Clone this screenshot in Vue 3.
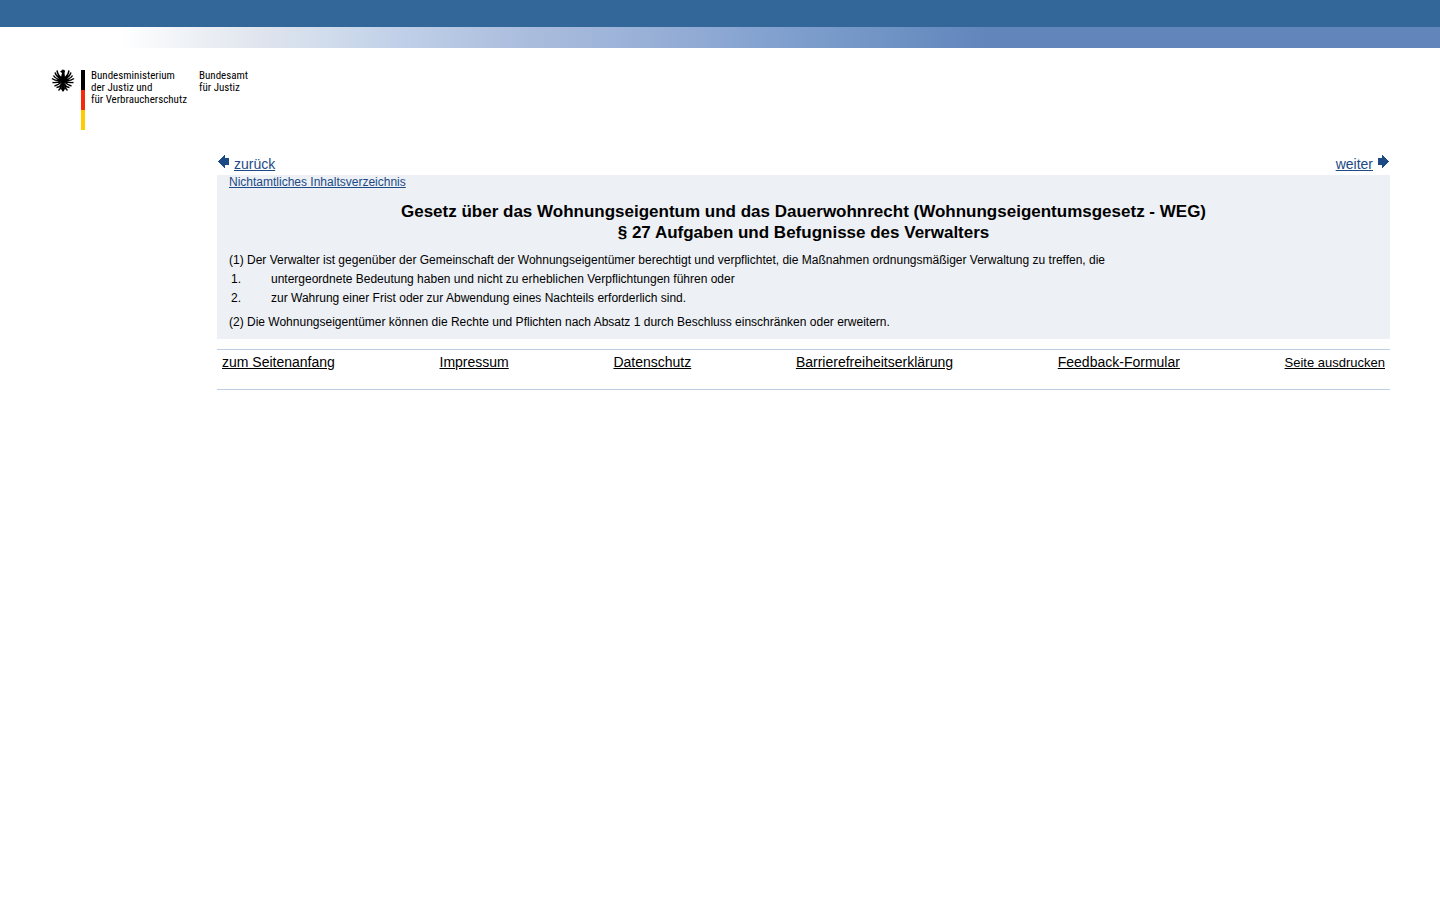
<template>
  <div class="page">
    <header>
      <div class="bar"></div>
      <div class="fade"></div>
      <div class="brand">
        <svg class="eagle" viewBox="0 0 24 24" aria-hidden="true">
          <path d="M10 3 11.5 1.5 13.5 2 14 3.5 13.5 5 14 9 14.5 13 13.5 17 14 21 12.5 23.5H11.5L10 21 10.5 17 9.5 13 10 9 11 5 9 3.5Z" />
          <path
            class="feathers"
            d="M10.5 10Q7 8 6 2.5M10.5 11Q5.5 9 4 4.500M10.5 12Q4.500 11 2.500 7.500M10.500 12.500Q4 13 1 10.500M10 13.500Q5 15 1.500 14.500M10 14.500Q7 17 3.500 18M10.500 16Q9.500 19 5.500 19.500M10.500 17Q9.500 21 7.500 22.500"
          />
          <path
            class="feathers"
            d="M13.5 10Q17 8 18 2.5M13.5 11Q18.500 9 20 4.500M13.500 12Q19.500 11 21.500 7.500M13.500 12.500Q20 13 23 10.500M14 13.500Q19 15 22.500 14.500M14 14.500Q17 17 20.500 18M13.500 16Q14.500 19 18.500 19.500M13.500 17Q14.500 21 16.500 22.500"
          />
        </svg>
        <div class="flag"><i class="black"></i><i class="red"></i><i class="gold"></i></div>
        <p class="ministry">Bundesministerium<br />der Justiz und<br />für Verbraucherschutz</p>
        <p class="office">Bundesamt<br />für Justiz</p>
      </div>
    </header>

    <main>
      <nav class="pager" aria-label="Blättern">
        <a href="#">
          <svg viewBox="0 0 12 13" aria-hidden="true"><path d="M1 6h1V5h1V4h1V3h1V2h1V1h1V0h1v3h4v7H8v3H7v-1H6v-1H5v-1H4V9H3V8H2V7H1z" /></svg>
          <span>zurück</span>
        </a>
        <a href="#">
          <span>weiter</span>
          <svg viewBox="0 0 12 13" aria-hidden="true"><path d="M11 6h-1V5H9V4H8V3H7V2H6V1H5V0H4v3H0v7h4v3h1v-1h1v-1h1v-1h1V9h1V8h1V7h1z" /></svg>
        </a>
      </nav>

      <article>
        <a class="toc" href="#">Nichtamtliches Inhaltsverzeichnis</a>
        <h1>
          Gesetz über das Wohnungseigentum und das Dauerwohnrecht (Wohnungseigentumsgesetz - WEG)<br />
          § 27 Aufgaben und Befugnisse des Verwalters
        </h1>
        <p>
          (1) Der Verwalter ist gegenüber der Gemeinschaft der Wohnungseigentümer berechtigt und verpflichtet, die
          Maßnahmen ordnungsmäßiger Verwaltung zu treffen, die
        </p>
        <dl>
          <template v-for="(text, i) in duties" :key="i">
            <dt>{{ i + 1 }}.</dt>
            <dd>{{ text }}</dd>
          </template>
        </dl>
        <p>
          (2) Die Wohnungseigentümer können die Rechte und Pflichten nach Absatz 1 durch Beschluss einschränken oder
          erweitern.
        </p>
      </article>

      <footer>
        <a v-for="link in links" :key="link" href="#">{{ link }}</a>
        <a class="print" href="#">Seite ausdrucken</a>
      </footer>
    </main>
  </div>
</template>

<script setup>
const duties = [
  'untergeordnete Bedeutung haben und nicht zu erheblichen Verpflichtungen führen oder',
  'zur Wahrung einer Frist oder zur Abwendung eines Nachteils erforderlich sind.',
];

const links = ['zum Seitenanfang', 'Impressum', 'Datenschutz', 'Barrierefreiheitserklärung', 'Feedback-Formular'];
</script>

<style>
body {
  margin: 0;
  background: #fff;
}
</style>

<style scoped>
.page {
  font-family: Arial, 'Liberation Sans', sans-serif;
  color: #000;
}

.bar {
  height: 27px;
  background: #336799;
}

.fade {
  height: 21px;
  background: linear-gradient(
    to right,
    #fff 120px,
    #ecf0f5 200px,
    #e0e4ee 260px,
    #d0dcec 330px,
    #bfcfe8 405px,
    #abbddd 525px,
    #96aed6 665px,
    #7f9fce 790px,
    #6f93c4 890px,
    #6285bc 990px
  );
}

.brand {
  display: flex;
  align-items: flex-start;
  height: 63px;
  padding: 20px 0 0 51px;
}

.eagle {
  width: 24px;
  height: 24px;
}

.feathers {
  fill: none;
  stroke: #000;
  stroke-width: 1.5;
}

.flag {
  display: flex;
  flex-direction: column;
  width: 4px;
  height: 60px;
  margin: 2px 6px 0 6px;
}

.flag i {
  flex: 1;
}

.black {
  background: #000;
}

.red {
  background: #f52a0c;
}

.gold {
  background: #fc0;
}

.brand p {
  margin: 2px 0 0;
  font: 11px/12px 'Roboto Condensed', Roboto, sans-serif;
  white-space: nowrap;
}

.brand .office {
  margin-left: 12px;
}

main {
  margin: 23px 50px 0 217px;
}

.pager {
  display: flex;
  justify-content: space-between;
  height: 21px;
  font-size: 14px;
  line-height: 20px;
}

.pager a {
  display: flex;
  gap: 5px;
  color: #1c4a85;
  text-decoration: none;
}

.pager span {
  text-decoration: underline;
}

.pager svg {
  width: 12px;
  height: 13px;
  margin-top: 1px;
  fill: #1c4a85;
}

article {
  padding: 0 12px 7px;
  background: #edf0f5;
  font-size: 12px;
  line-height: 19px;
}

.toc {
  display: block;
  width: fit-content;
  color: #1c4a85;
  line-height: 14px;
}

h1 {
  margin: 12px 0 8px;
  font-size: 17px;
  line-height: 21px;
  text-align: center;
}

article p {
  margin: 0;
}

dl {
  display: grid;
  grid-template-columns: 40px 1fr;
  margin: 0 0 5px 2px;
}

dd {
  margin: 0;
}

footer {
  display: flex;
  justify-content: space-between;
  align-items: baseline;
  height: 39px;
  margin-top: 10px;
  padding: 0 5px;
  border-top: 1px solid #c0cee4;
  border-bottom: 1px solid #c0cee4;
  font-size: 14px;
  line-height: 25px;
}

footer a {
  color: #000;
}

footer .print {
  font-size: 13px;
}
</style>
